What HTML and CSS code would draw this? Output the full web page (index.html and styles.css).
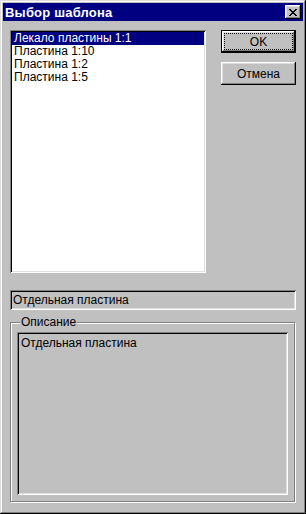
FILE: index.html
```html
<!DOCTYPE html>
<html lang="ru">
<head>
  <meta charset="UTF-8">
  <meta name="viewport" content="width=device-width, initial-scale=1">
  <title>Выбор шаблона</title>
  <link rel="stylesheet" href="styles.css">
</head>
<body>
<div class="window">
  <div class="titlebar">
    <span class="title">Выбор шаблона</span>
    <button class="close" title="Закрыть">
      <svg width="8" height="7" viewBox="0 0 8 7">
        <path d="M0 0h2v1h1v1h2v-1h1v-1h2v1h-1v1h-1v1h-1v1h1v1h1v1h1v1h-2v-1h-1v-1h-2v1h-1v1h-2v-1h1v-1h1v-1h1v-1h-1v-1h-1v-1h-1z" fill="#000"/>
      </svg>
    </button>
  </div>
  <div class="content">
    <div class="top">
      <ul class="listbox">
        <li class="selected">Лекало пластины 1:1</li>
        <li>Пластина 1:10</li>
        <li>Пластина 1:2</li>
        <li>Пластина 1:5</li>
      </ul>
      <div class="buttons">
        <button class="btn default"><span class="focus">OK</span></button>
        <button class="btn">Отмена</button>
      </div>
    </div>
    <div class="field">Отдельная пластина</div>
    <fieldset class="group">
      <legend>Описание</legend>
      <div class="memo">Отдельная пластина</div>
    </fieldset>
  </div>
</div>
</body>
</html>
```

FILE: styles.css
```css
    body {
      margin: 0;
      font-family: "Liberation Sans", Arial, sans-serif;
      font-size: 12px;
      background-color: #c0c0c0;
    }
    .window {
      width: 306px;
      height: 514px;
      box-sizing: border-box;
      padding: 3px;
      display: flex;
      flex-direction: column;
      background-color: #c0c0c0;
      box-shadow: inset -1px -1px #000, inset 1px 1px #dfdfdf,
                  inset -2px -2px #808080, inset 2px 2px #fff;
    }
    .titlebar {
      height: 18px;
      display: flex;
      align-items: center;
      justify-content: space-between;
      padding: 0 2px 0 2px;
      background-color: #000080;
    }
    .title {
      color: #fff;
      font-weight: bold;
      font-size: 13px;
      letter-spacing: 0.2px;
    }
    .close {
      width: 16px;
      height: 14px;
      padding: 0;
      border: none;
      display: flex;
      align-items: center;
      justify-content: center;
      background-color: #c0c0c0;
      box-shadow: inset -1px -1px #000, inset 1px 1px #fff,
                  inset -2px -2px #808080, inset 2px 2px #dfdfdf;
    }
    .content {
      flex: 1;
      display: flex;
      flex-direction: column;
      padding: 9px 7px 9px 7px;
    }
    .top {
      display: flex;
      justify-content: space-between;
    }
    .listbox {
      width: 196px;
      height: 243px;
      box-sizing: border-box;
      margin: 0;
      padding: 2px;
      list-style: none;
      background-color: #fff;
      box-shadow: inset 1px 1px #808080, inset -1px -1px #fff,
                  inset 2px 2px #000, inset -2px -2px #dfdfdf;
    }
    .listbox li {
      height: 13px;
      line-height: 13px;
      padding-left: 2px;
      white-space: nowrap;
    }
    .listbox li.selected {
      background-color: #000080;
      color: #fff;
    }
    .buttons {
      display: flex;
      flex-direction: column;
      gap: 9px;
    }
    .btn {
      width: 75px;
      height: 23px;
      padding: 0;
      border: none;
      font-family: "Liberation Sans", Arial, sans-serif;
      font-size: 12px;
      color: #000;
      background-color: #c0c0c0;
      box-shadow: inset -1px -1px #000, inset 1px 1px #fff,
                  inset -2px -2px #808080, inset 2px 2px #dfdfdf;
    }
    .btn.default {
      display: flex;
      padding: 4px;
      box-shadow: inset 0 0 0 1px #000,
                  inset -2px -2px #000, inset 2px 2px #fff,
                  inset -3px -3px #808080, inset 3px 3px #dfdfdf;
    }
    .focus {
      flex: 1;
      display: flex;
      align-items: center;
      justify-content: center;
      outline: 1px dotted #000;
    }
    .field {
      margin-top: 17px;
      height: 20px;
      box-sizing: border-box;
      padding: 3px 3px 0 3px;
      line-height: 14px;
      white-space: nowrap;
      box-shadow: inset 1px 1px #808080, inset -1px -1px #fff,
                  inset 2px 2px #000, inset -2px -2px #dfdfdf;
    }
    .group {
      flex: 1;
      display: flex;
      flex-direction: column;
      margin: 6px 1px 0 0;
      padding: 3px 6px 6px 6px;
      border: 1px solid #808080;
      box-shadow: inset 1px 1px #fff, 1px 1px #fff;
      min-width: 0;
    }
    .group legend {
      margin-left: 3px;
      padding: 0 1px;
      line-height: 13px;
      background-color: #c0c0c0;
    }
    .memo {
      flex: 1;
      padding: 4px 4px;
      line-height: 14px;
      box-shadow: inset 1px 1px #808080, inset -1px -1px #fff,
                  inset 2px 2px #000, inset -2px -2px #dfdfdf;
    }
```
